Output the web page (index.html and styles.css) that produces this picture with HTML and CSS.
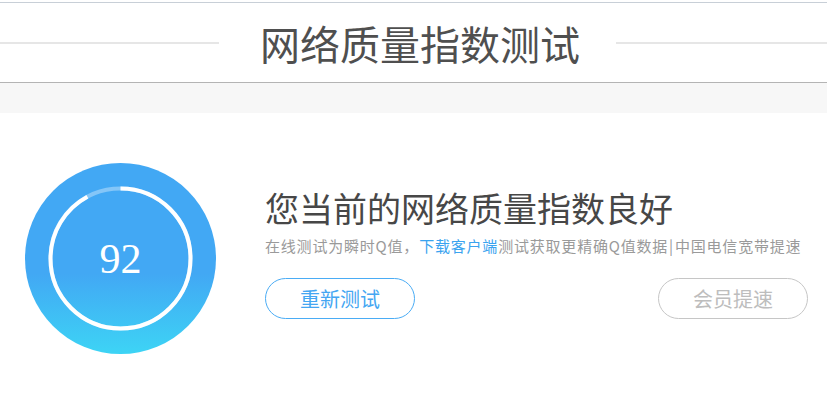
FILE: index.html
```html
<!DOCTYPE html>
<html lang="zh-CN">
<head>
<meta charset="utf-8">
<title>网络质量指数测试</title>
<link rel="stylesheet" href="styles.css">
</head>
<body>
<div class="top-rule"></div>
<header class="header">
  <span class="header-line header-line-left"></span>
  <h1 class="header-title">网络质量指数测试</h1>
  <span class="header-line"></span>
</header>
<div class="band"></div>
<main class="result">
  <div class="gauge">
    <svg class="gauge-ring" width="191" height="191" viewBox="0 0 191 191">
      <circle class="ring-track" cx="95.5" cy="95.5" r="70"></circle>
      <circle class="ring-progress" cx="95.5" cy="95.5" r="70" stroke-dasharray="404.6 439.8" transform="rotate(-90 95.5 95.5)"></circle>
    </svg>
    <span class="gauge-value">92</span>
  </div>
  <div class="info">
    <h2 class="info-title">您当前的网络质量指数良好</h2>
    <p class="info-desc">在线测试为瞬时Q值，<a class="info-link" href="#">下载客户端</a>测试获取更精确Q值数据<span class="sep">|</span>中国电信宽带提速</p>
    <div class="actions">
      <a class="btn btn-primary" href="#">重新测试</a>
      <a class="btn btn-muted" href="#">会员提速</a>
    </div>
  </div>
</main>
</body>
</html>
```

FILE: styles.css
```css
html, body {
  margin: 0;
  padding: 0;
  background: #fff;
}
body {
  font-family: "Noto Sans CJK SC", "Noto Sans", sans-serif;
}
.top-rule {
  margin-top: 2px;
  height: 1px;
  background: #c8cfd7;
}
.header {
  display: flex;
  align-items: center;
  height: 79px;
  border-bottom: 1px solid #b4b4b4;
}
.header-line {
  flex: 1 1 0;
  height: 2px;
  background: #e6e6e6;
  margin-top: 1px;
}
.header-line-left {
  flex: 1 1 8px;
}
.header-title {
  margin: 0;
  padding: 0 36px 0 41px;
  font-size: 40px;
  line-height: 50px;
  font-weight: 400;
  color: #4f4f4f;
}
.band {
  height: 30px;
  background: #f7f7f7;
}
.result {
  display: flex;
  padding: 50px 19px 0 25px;
  gap: 49px;
}
.gauge {
  position: relative;
  flex: none;
  width: 191px;
  height: 191px;
  border-radius: 50%;
  background: linear-gradient(to bottom, #42a8f4 0%, #42a8f4 58%, #3dd4f5 100%);
  display: flex;
  align-items: center;
  justify-content: center;
}
.gauge-ring {
  position: absolute;
  left: 0;
  top: 0;
}
.ring-track {
  fill: none;
  stroke: rgba(255, 255, 255, 0.35);
  stroke-width: 4;
}
.ring-progress {
  fill: none;
  stroke: #fff;
  stroke-width: 4;
}
.gauge-value {
  position: relative;
  font-family: "Liberation Serif", "DejaVu Serif", serif;
  font-size: 42px;
  color: #fff;
  line-height: 1;
}
.info {
  flex: 1;
  padding-top: 24px;
}
.info-title {
  margin: 0;
  font-size: 34px;
  line-height: 42px;
  font-weight: 400;
  color: #474747;
}
.info-desc {
  margin: 7px 0 0 0;
  font-size: 15px;
  line-height: 20px;
  color: #9a9a9a;
  letter-spacing: 0.8px;
  white-space: nowrap;
}
.sep {
  margin: 0 1px;
}
.info-link {
  color: #3aa3ef;
  text-decoration: none;
}
.actions {
  display: flex;
  justify-content: space-between;
  margin-top: 22px;
}
.btn {
  box-sizing: border-box;
  width: 150px;
  height: 41px;
  border-radius: 21px;
  display: flex;
  align-items: center;
  justify-content: center;
  font-size: 20px;
  text-decoration: none;
}
.btn-primary {
  border: 1px solid #4aacf5;
  color: #44a6f2;
}
.btn-muted {
  border: 1px solid #c6c6c6;
  color: #bdbdbd;
}
```
